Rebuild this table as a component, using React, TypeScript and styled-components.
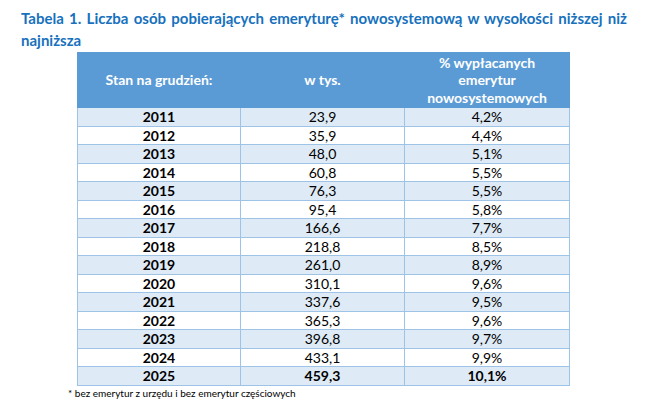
import React from "react";
import styled, { createGlobalStyle } from "styled-components";

const GlobalStyle = createGlobalStyle`
	html, body {
		margin: 0;
		padding: 0;
		background: #ffffff;
	}
	body {
		font-family: Lato, "Open Sans", "Liberation Sans", sans-serif;
	}
`;

type Row = {
	year: string;
	value: string;
	percent: string;
	bold?: boolean;
};

const rows: Row[] = [
	{ year: "2011", value: "23,9", percent: "4,2%" },
	{ year: "2012", value: "35,9", percent: "4,4%" },
	{ year: "2013", value: "48,0", percent: "5,1%" },
	{ year: "2014", value: "60,8", percent: "5,5%" },
	{ year: "2015", value: "76,3", percent: "5,5%" },
	{ year: "2016", value: "95,4", percent: "5,8%" },
	{ year: "2017", value: "166,6", percent: "7,7%" },
	{ year: "2018", value: "218,8", percent: "8,5%" },
	{ year: "2019", value: "261,0", percent: "8,9%" },
	{ year: "2020", value: "310,1", percent: "9,6%" },
	{ year: "2021", value: "337,6", percent: "9,5%" },
	{ year: "2022", value: "365,3", percent: "9,6%" },
	{ year: "2023", value: "396,8", percent: "9,7%" },
	{ year: "2024", value: "433,1", percent: "9,9%" },
	{ year: "2025", value: "459,3", percent: "10,1%", bold: true },
];

const App: React.FC = () => {
	return (
		<Page>
			<GlobalStyle />
			<Title>
				Tabela 1. Liczba osób pobierających emeryturę* nowosystemową w
				wysokości niższej niż najniższa
			</Title>
			<Table>
				<colgroup>
					<col style={{ width: 163 }} />
					<col style={{ width: 164 }} />
					<col style={{ width: 165 }} />
				</colgroup>
				<thead>
					<tr>
						<Th>Stan na grudzień:</Th>
						<Th>w tys.</Th>
						<Th>
							% wypłacanych
							<br />
							emerytur
							<br />
							nowosystemowych
						</Th>
					</tr>
				</thead>
				<tbody>
					{rows.map((r, i) => (
						<Tr key={r.year} $striped={i % 2 === 0}>
							<Td $bold>{r.year}</Td>
							<Td $bold={r.bold}>{r.value}</Td>
							<Td $bold={r.bold}>{r.percent}</Td>
						</Tr>
					))}
				</tbody>
			</Table>
			<Note>* bez emerytur z urzędu i bez emerytur częściowych</Note>
		</Page>
	);
};

export default App;

const Page = styled.div`
	width: 606px;
	padding: 8px 0 0 21px;
`;

const Title = styled.h1`
	margin: 0;
	font-size: 15px;
	line-height: 21.5px;
	font-weight: 700;
	color: #1771bd;
	text-align: justify;
`;

const Table = styled.table`
	margin: 1px 0 0 56px;
	width: 492px;
	border-collapse: collapse;
	table-layout: fixed;
	font-size: 14px;
	color: #000000;
`;

const Th = styled.th`
	height: 54px;
	padding: 0;
	background: #5b9bd5;
	color: #ffffff;
	font-weight: 700;
	font-size: 14px;
	line-height: 17.5px;
	text-align: center;
	vertical-align: middle;
	border: 1px solid #5b9bd5;
`;

const Tr = styled.tr<{ $striped: boolean }>`
	background: ${(p) => (p.$striped ? "#deeaf6" : "#ffffff")};
`;

const Td = styled.td<{ $bold?: boolean }>`
	height: 17.5px;
	padding: 0;
	text-align: center;
	line-height: 17px;
	font-weight: ${(p) => (p.$bold ? 700 : 400)};
	border: 1px solid #9dc3e6;
`;

const Note = styled.div`
	margin: 1px 0 0 47px;
	font-size: 10px;
	line-height: 13px;
	color: #000000;
`;
